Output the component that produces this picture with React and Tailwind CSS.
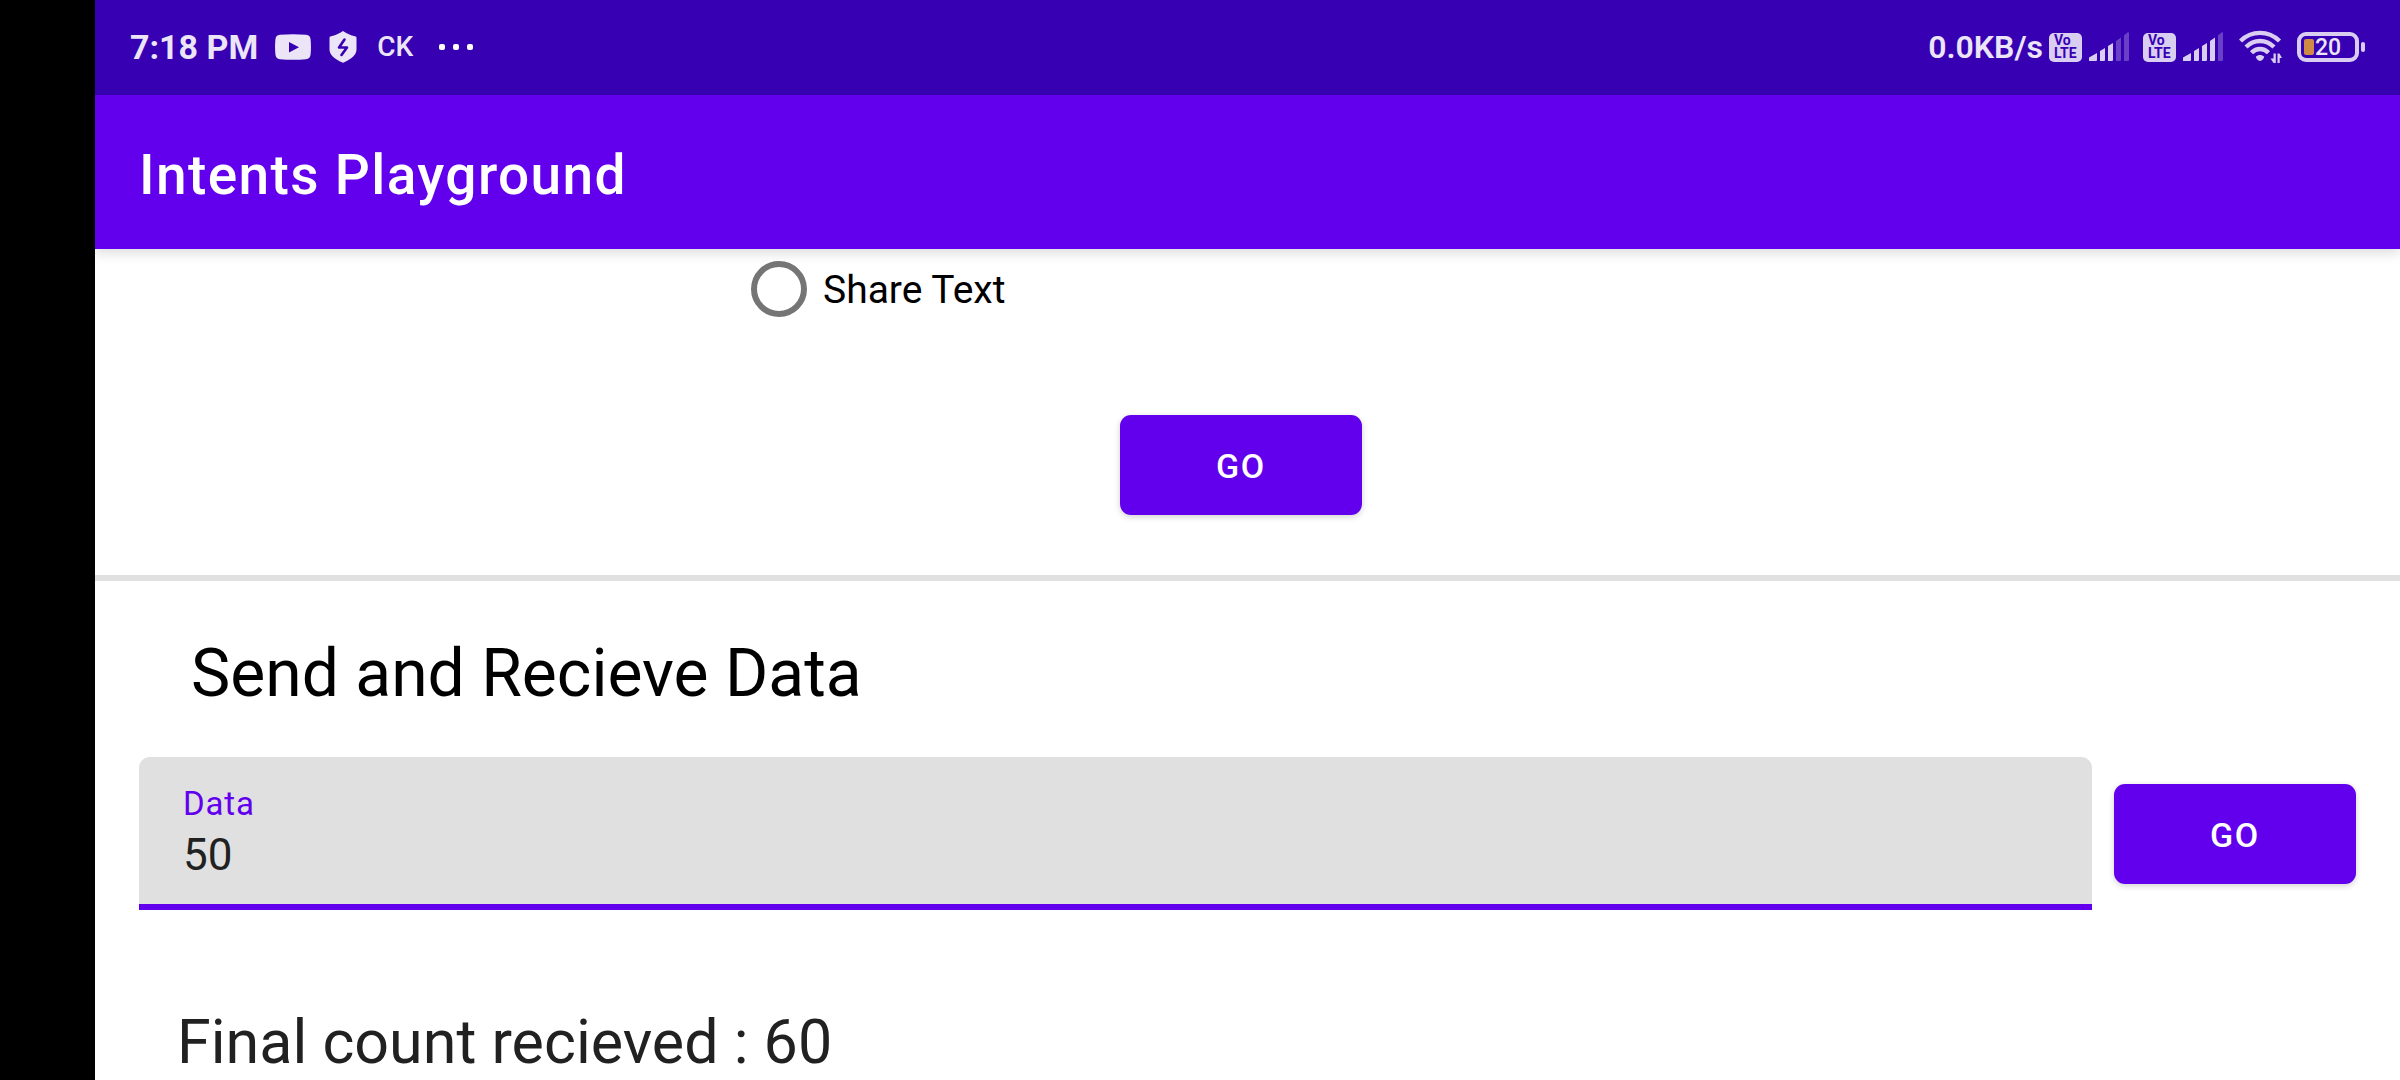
import { useState } from "react";

function YouTubeIcon() {
  return (
    <svg width="36" height="26" viewBox="0 0 36 26" fill="none" aria-hidden="true">
      <path
        fill="#ebe5f7"
        fillRule="evenodd"
        d="M5 .8C13 0 23 0 31 .8c3 .3 4.3 1.800 4.600 4.600.5 5 .5 10.200 0 15.200-.3 2.800-1.600 4.300-4.600 4.600-8 .8-18 .8-26 0-3-.3-4.300-1.800-4.600-4.600-.5-5-.5-10.200 0-15.200C.7 2.600 2 1.100 5 .8ZM14 8v10.500L24 13.200Z"
      />
    </svg>
  );
}

function ShieldIcon() {
  return (
    <svg width="28" height="32" viewBox="0 0 28 32" fill="none" aria-hidden="true">
      <path
        fill="#ebe5f7"
        d="M14 0c3.500 2.600 8 4.500 12 5.300 1 .2 1.500.8 1.500 1.800v11.500c0 5.500-5.500 10-13.500 13.200C6 28.600.5 24.100.5 18.600V7.100c0-1 .5-1.600 1.500-1.800C6 4.500 10.500 2.600 14 0Z"
      />
      <path d="M15.500 8.500 10 16.500h8L12.500 24" stroke="#3700b3" strokeWidth="2.600" strokeLinecap="round" strokeLinejoin="round" />
    </svg>
  );
}

function MoreDots() {
  return (
    <svg width="34" height="6" viewBox="0 0 34 6" fill="#ffffff" aria-hidden="true">
      <rect x="0" width="6" height="6" rx="2" />
      <rect x="14" width="6" height="6" rx="2" />
      <rect x="28" width="6" height="6" rx="2" />
    </svg>
  );
}

function VoLte() {
  return (
    <span className="flex h-[29px] w-[33px] flex-col justify-center rounded-[5px] bg-[#d9cef2] pl-[5px] text-[14px] leading-[13px] font-bold text-[#3700b3]">
      <span>Vo</span>
      <span>LTE</span>
    </span>
  );
}

function Signal({ level }) {
  const bars = [
    "M0 29v-3.500L8 21v6.500c0 1-.5 1.500-1.500 1.500Z",
    "M11 29V19l5-3v11.500c0 1-.5 1.500-1.500 1.500Z",
    "M19 29V14l5-3v16.500c0 1-.5 1.500-1.500 1.500Z",
    "M27 29V9l5-3.500v22c0 1-.5 1.500-1.500 1.500Z",
    "M35 29V3.500L38.500.6c.9-.7 1.500-.4 1.500.6v26.300c0 1-.5 1.500-1.500 1.500Z",
  ];
  return (
    <svg width="40" height="30" viewBox="0 0 40 30" aria-hidden="true">
      {bars.map((d, i) => (
        <path key={d} d={d} fill={i < level ? "#d9cef2" : "#6b40c8"} />
      ))}
    </svg>
  );
}

function WifiIcon() {
  return (
    <svg width="43" height="34" viewBox="0 0 43 34" fill="none" aria-hidden="true">
      <g stroke="#d9cef2" strokeWidth="4.400">
        <path d="M1.500 11C12.500 .2 29.500 .2 40.500 11" />
        <path d="M7 17C15 9 27 9 35 17" />
        <path d="M12.500 22.800C17.500 17.700 24.500 17.700 29.500 22.800" />
      </g>
      <path fill="#d9cef2" d="M16.800 26.600c2.600-2.300 5.800-2.300 8.400 0-.4 2.400-2 4.400-4.200 4.400s-3.800-2-4.200-4.400Z" />
      <path fill="#d9cef2" d="M36.800 23.500V33h-2.300l-3-4.500h3v-5ZM38.500 33v-9.500h2l2.500 4.500h-2.300v5Z" />
    </svg>
  );
}

function Battery({ level }) {
  return (
    <span className="flex items-center gap-[2px]">
      <span className="flex h-[30px] w-[62px] items-center rounded-[9px] border-4 border-[#d9cef2] pl-[3px]">
        <span className="h-4 w-[10px] rounded-[2px] bg-[#d08a45]" />
        <span className="pl-px text-[23px] leading-none font-medium text-[#ebe5f7]">{level}</span>
      </span>
      <span className="h-[10px] w-1 rounded-[2px] bg-[#d9cef2]" />
    </span>
  );
}

function StatusBar() {
  return (
    <div className="flex h-[95px] items-center justify-between bg-[#3700b3] px-[35px] pb-px text-[#ebe5f7]">
      <div className="flex items-center">
        <span className="text-[34px] leading-none font-bold">7:18 PM</span>
        <span className="ml-[17px] flex items-center">
          <YouTubeIcon />
        </span>
        <span className="ml-[18px]">
          <ShieldIcon />
        </span>
        <span className="ml-5 text-[28px] leading-none font-medium">CK</span>
        <span className="ml-[26px] flex items-center">
          <MoreDots />
        </span>
      </div>
      <div className="flex items-center">
        <span className="text-[32px] leading-none font-semibold">0.0KB/s</span>
        <span className="ml-[6px] flex items-center gap-[7px]">
          <VoLte />
          <Signal level={3} />
        </span>
        <span className="ml-[14px] flex items-center gap-[7px]">
          <VoLte />
          <Signal level={4} />
        </span>
        <span className="ml-4">
          <WifiIcon />
        </span>
        <span className="ml-[15px]">
          <Battery level={20} />
        </span>
      </div>
    </div>
  );
}

function GoButton() {
  return (
    <button
      type="button"
      className="h-[100px] w-[242px] shrink-0 rounded-[11px] bg-[#6200ee] pt-[2px] text-[34px] leading-none font-medium tracking-wider text-white shadow-[0_2px_6px_rgba(0,0,0,0.18)]"
    >
      GO
    </button>
  );
}

export default function App() {
  const [data, setData] = useState("50");
  const [shared, setShared] = useState(false);

  return (
    <div className="flex min-h-screen bg-black font-['Roboto',sans-serif]">
      <div className="w-[95px] shrink-0 bg-black" />
      <div className="flex min-w-0 flex-1 flex-col bg-white">
        <StatusBar />
        <header className="flex h-[154px] items-center bg-[#6200ee] px-11 shadow-[0_4px_12px_rgba(0,0,0,0.14)]">
          <h1 className="pt-[6px] text-[55px] leading-none font-medium tracking-wide text-white">Intents Playground</h1>
        </header>

        <main className="flex flex-1 flex-col">
          <section className="flex flex-col items-center border-b-[6px] border-[#e0e0e0] pt-3 pr-[13px] pb-[60px]">
            <div className="w-full max-w-[980px]">
              <label className="flex w-fit items-center gap-4 text-[39px] leading-[54px] text-black">
                <input
                  type="radio"
                  name="intent"
                  checked={shared}
                  onChange={() => setShared(true)}
                  className="size-14 appearance-none rounded-full border-[6px] border-[#757575] checked:border-[#6200ee] checked:bg-[#6200ee] checked:bg-clip-content checked:p-2"
                />
                <span className="pt-[2px]">Share Text</span>
              </label>
            </div>
            <div className="mt-[98px]">
              <GoButton />
            </div>
          </section>

          <section className="pt-[60px]">
            <h2 className="pl-24 text-[66px] leading-[66px] text-black">Send and Recieve Data</h2>
            <div className="mt-[50px] flex items-center gap-[22px] px-11">
              <div className="flex h-[153px] flex-1 flex-col rounded-t-[11px] border-b-[6px] border-[#6200ee] bg-[#e0e0e0] px-11 pt-[30px]">
                <label htmlFor="data" className="text-[33px] leading-[34px] tracking-wide text-[#6200ee]">
                  Data
                </label>
                <input
                  id="data"
                  value={data}
                  onChange={(e) => setData(e.target.value)}
                  className="mt-2 h-[52px] w-full bg-transparent text-[44px] leading-[52px] text-[#212121] outline-none"
                />
              </div>
              <GoButton />
            </div>
            <p className="mt-[102px] pl-[82px] text-[61px] leading-[60px] text-[#212121]">Final count recieved : 60</p>
          </section>
        </main>
      </div>
    </div>
  );
}
